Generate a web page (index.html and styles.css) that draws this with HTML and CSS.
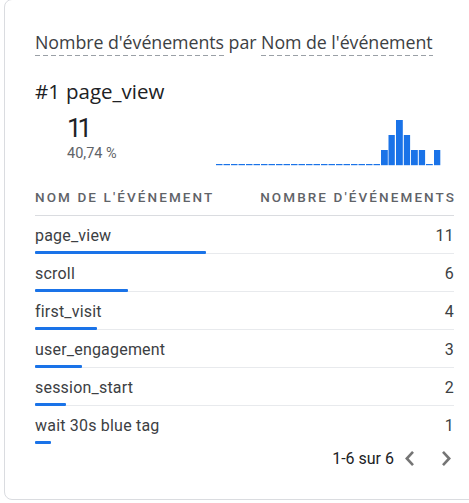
FILE: index.html
```html
<!DOCTYPE html>
<html lang="fr">
<head>
<meta charset="utf-8">
<link rel="stylesheet" href="styles.css">
</head>
<body>
<div class="card">
  <div class="title"><span class="dim">Nombre d'événements</span> par <span class="dim">Nom de l'événement</span></div>
  <div class="top">
    <div class="rank"><span class="rank-num">#1</span><span>page_view</span></div>
    <div class="summary">
      <div class="nums">
        <div class="big">11</div>
        <div class="pct">40,74 %</div>
      </div>
      <svg class="spark" width="226" height="48" viewBox="0 0 226 48">
        <g fill="#1a73e8">
          <rect x="0" y="46" width="6.5" height="1.2"/>
          <rect x="7.5" y="46" width="6.5" height="1.2"/>
          <rect x="15" y="46" width="6.5" height="1.2"/>
          <rect x="22.5" y="46" width="6.5" height="1.2"/>
          <rect x="30" y="46" width="6.5" height="1.2"/>
          <rect x="37.5" y="46" width="6.5" height="1.2"/>
          <rect x="45" y="46" width="6.5" height="1.2"/>
          <rect x="52.5" y="46" width="6.5" height="1.2"/>
          <rect x="60" y="46" width="6.5" height="1.2"/>
          <rect x="67.5" y="46" width="6.5" height="1.2"/>
          <rect x="75" y="46" width="6.5" height="1.2"/>
          <rect x="82.5" y="46" width="6.5" height="1.2"/>
          <rect x="90" y="46" width="6.5" height="1.2"/>
          <rect x="97.5" y="46" width="6.5" height="1.2"/>
          <rect x="105" y="46" width="6.5" height="1.2"/>
          <rect x="112.5" y="46" width="6.5" height="1.2"/>
          <rect x="120" y="46" width="6.5" height="1.2"/>
          <rect x="127.5" y="46" width="6.5" height="1.2"/>
          <rect x="135" y="46" width="6.5" height="1.2"/>
          <rect x="142.5" y="46" width="6.5" height="1.2"/>
          <rect x="150" y="46" width="6.5" height="1.2"/>
          <rect x="157.5" y="46" width="6.5" height="1.2"/>
          <rect x="165" y="32" width="6.8" height="15.2"/>
          <rect x="172.5" y="17" width="6.3" height="30.2"/>
          <rect x="180" y="2" width="6.8" height="45.2"/>
          <rect x="187.8" y="17" width="6.3" height="30.2"/>
          <rect x="195" y="32" width="6.8" height="15.2"/>
          <rect x="202.8" y="32" width="6.3" height="15.2"/>
          <rect x="210" y="46" width="6.8" height="1.2"/>
          <rect x="218" y="32" width="6.3" height="15.2"/>
        </g>
      </svg>
    </div>
  </div>
  <div class="table">
    <div class="thead">
      <div>Nom de l'événement</div>
      <div>Nombre d'événements</div>
    </div>
    <div class="row">
      <div class="cells"><span>page_view</span><span>11</span></div>
      <div class="bar" style="width:40.74%"></div>
    </div>
    <div class="row">
      <div class="cells"><span>scroll</span><span>6</span></div>
      <div class="bar" style="width:22.22%"></div>
    </div>
    <div class="row">
      <div class="cells"><span>first_visit</span><span>4</span></div>
      <div class="bar" style="width:14.81%"></div>
    </div>
    <div class="row">
      <div class="cells"><span>user_engagement</span><span>3</span></div>
      <div class="bar" style="width:11.11%"></div>
    </div>
    <div class="row">
      <div class="cells"><span>session_start</span><span>2</span></div>
      <div class="bar" style="width:7.41%"></div>
    </div>
    <div class="row last">
      <div class="cells"><span>wait 30s blue tag</span><span>1</span></div>
      <div class="bar" style="width:3.70%"></div>
    </div>
  </div>
  <div class="pager">
    <span class="count">1-6 sur 6</span>
    <svg class="chev" width="24" height="24" viewBox="0 0 24 24"><path d="M15 5.8 8.8 12.5 15 19.2" fill="none" stroke="#757575" stroke-width="2.6"/></svg>
    <svg class="chev" width="24" height="24" viewBox="0 0 24 24"><path d="M9 5.8l6.2 6.7L9 19.2" fill="none" stroke="#757575" stroke-width="2.6"/></svg>
  </div>
</div>
</body>
</html>
```

FILE: styles.css
```css
html, body {
  margin: 0;
  padding: 0;
  overflow: hidden;
  background: #ffffff;
}
body {
  padding: 0 0 0 4px;
  font-family: Roboto, "Liberation Sans", sans-serif;
  color: #3c4043;
}
.card {
  box-sizing: border-box;
  width: 481px;
  height: 501px;
  margin-top: -1px;
  border: 1px solid #dadce0;
  border-radius: 8px;
  padding: 30px 30px 0 30px;
  background: #fff;
}
.title {
  font-family: "Open Sans", Roboto, sans-serif;
  font-size: 17.8px;
  line-height: 24px;
  color: #3c4043;
  white-space: nowrap;
  letter-spacing: -0.05px;
}
.dim {
  padding-bottom: 2px;
  background-image: linear-gradient(to right, #9aa0a6 62%, transparent 62%);
  background-size: 8px 1px;
  background-repeat: repeat-x;
  background-position: 0 100%;
}
.top {
  margin-top: 24px;
}
.rank {
  font-family: "Open Sans", Roboto, sans-serif;
  font-size: 20.5px;
  line-height: 26px;
  color: #202124;
  display: flex;
}
.rank-num {
  width: 31px;
}
.summary {
  display: flex;
  align-items: flex-end;
  justify-content: space-between;
  padding-left: 32px;
}
.nums {
  padding-top: 9px;
}
.big {
  font-size: 26px;
  line-height: 30px;
  color: #202124;
  letter-spacing: -4px;
}
.pct {
  font-size: 14.5px;
  line-height: 18px;
  margin-top: 2px;
  color: #5f6368;
}
.spark {
  display: block;
  margin-right: 12px;
  margin-bottom: -3px;
}
.table {
  width: 419px;
  margin-top: 16px;
}
.thead {
  display: flex;
  justify-content: space-between;
  font-size: 13.5px;
  font-weight: 500;
  letter-spacing: 2.1px;
  text-transform: uppercase;
  color: #5f6368;
  line-height: 18px;
  padding: 9px 0 9px;
  border-bottom: 1px solid #dadce0;
}
.thead div:last-child {
  margin-right: -2.1px;
}
.row {
  height: 38px;
  position: relative;
  border-bottom: 1px solid #e8eaed;
  box-sizing: border-box;
}
.row.last {
  border-bottom: none;
}
.cells {
  display: flex;
  justify-content: space-between;
  font-size: 16px;
  letter-spacing: 0.2px;
  line-height: 20px;
  padding-top: 10px;
  color: #3c4043;
}
.bar {
  position: absolute;
  left: 0;
  bottom: -1px;
  height: 3px;
  background: #1a73e8;
  border-radius: 1px;
}
.row.last .bar {
  bottom: 0;
}
.pager {
  display: flex;
  justify-content: flex-end;
  align-items: center;
  margin-top: 2px;
  margin-right: -4px;
  width: 423px;
  font-size: 16px;
  color: #202124;
}
.count {
  margin-right: 4px;
}
.chev {
  margin-left: 12px;
}
.count + .chev {
  margin-left: 0;
}
```
